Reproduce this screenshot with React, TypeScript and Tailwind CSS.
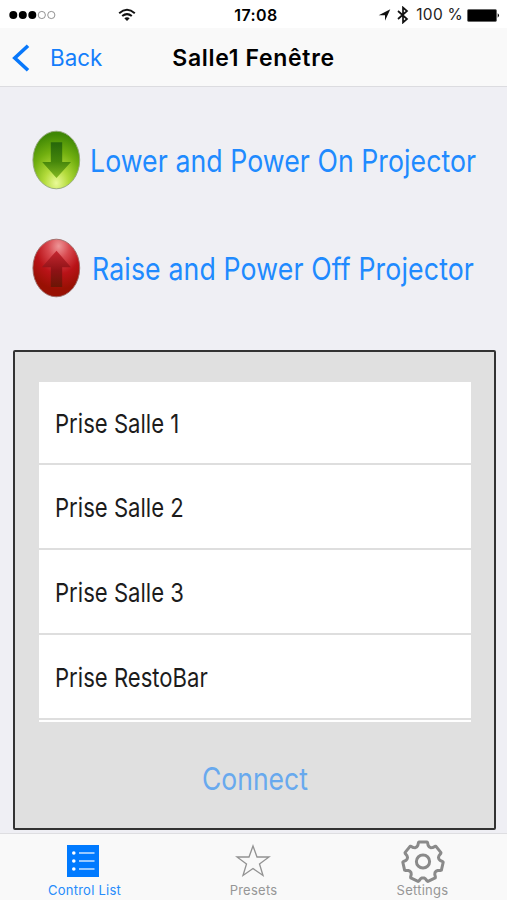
import type { ReactNode } from 'react';

const TEETH = 7;

function gearPath(cx: number, cy: number, outer: number, inner: number) {
  const points: string[] = [];
  const add = (radius: number, degrees: number) => {
    const a = (degrees * Math.PI) / 180;
    points.push(`${(cx + radius * Math.sin(a)).toFixed(2)} ${(cy - radius * Math.cos(a)).toFixed(2)}`);
  };
  for (let i = 0; i < TEETH; i++) {
    const c = (i * 360) / TEETH;
    add(inner + 0.6, c - 17.5);
    add(outer - 0.6, c - 13.5);
    add(outer, c - 11.5);
    add(outer, c + 11.5);
    add(outer - 0.6, c + 13.5);
    add(inner + 0.6, c + 17.5);
    add(inner - 0.5, c + 180 / TEETH - 3);
    add(inner - 0.5, c + 180 / TEETH + 3);
  }
  return `M${points.join('L')}Z`;
}

function StatusBar() {
  return (
    <div className="grid h-7 shrink-0 grid-cols-[1fr_auto_1fr] items-center bg-white pt-[2px]">
      <div className="flex items-center pl-[9px]">
        <svg width="47" height="10" viewBox="0 0 47 10">
          <circle cx="4.3" cy="5" r="4" />
          <circle cx="13.8" cy="5" r="4" />
          <circle cx="23.3" cy="5" r="4" />
          <circle cx="32.8" cy="5" r="3.6" fill="none" stroke="#777" strokeWidth="0.8" />
          <circle cx="42.3" cy="5" r="3.6" fill="none" stroke="#777" strokeWidth="0.8" />
        </svg>
        <svg className="ml-[62px]" width="18" height="14" viewBox="0 0 18 14" fill="none" stroke="#111" strokeWidth="2">
          <path d="M1.2 5.2Q9 -1.6 16.8 5.2M4.2 8.1Q9 4.1 13.8 8.1" />
          <path d="M6.3 10.2Q9 8.3 11.7 10.2L9 13Z" fill="#111" stroke="none" />
        </svg>
      </div>
      <span className="pl-[5px] text-[16px] leading-5 font-semibold tracking-[0.45px]">17:08</span>
      <div className="flex items-center justify-end pr-[7px]">
        <svg width="13" height="12" viewBox="0 0 13 12">
          <path d="M12.3.3 7 11.8V6.3H.7Z" fill="#111" />
        </svg>
        <svg className="ml-[6px]" width="12" height="18" viewBox="0 0 12 18" fill="none" stroke="#111" strokeWidth="1.7">
          <path d="M1 5 10 13 6 16.5V1.5L10 5 1 13" />
        </svg>
        <span className="ml-[7px] text-[15.5px] leading-5 tracking-[0.25px] whitespace-nowrap text-[#222]">100 %</span>
        <svg className="ml-[4px]" width="33" height="13" viewBox="0 0 33 13">
          <rect x=".5" y=".5" width="29" height="12" rx="1.3" fill="#000" stroke="#666" />
          <path d="M30.7 4.3q2.6 2.2 0 4.4Z" />
        </svg>
      </div>
    </div>
  );
}

function NavBar() {
  return (
    <div className="grid h-[59px] shrink-0 grid-cols-[1fr_auto_1fr] items-center border-b border-[#dcdce0] bg-[#f9f9f9]">
      <div className="flex items-center pt-px pl-[12px] text-[#147efb]">
        <svg width="18" height="28" viewBox="0 0 18 28" fill="none" stroke="#0878fb" strokeWidth="3.6">
          <path d="M16 1.7 2.8 14 16 26.3" />
        </svg>
        <span className="ml-[20px] pt-px text-[22.4px] leading-7">Back</span>
      </div>
      <h1 className="pt-[2px] text-[23px] leading-7 font-semibold tracking-[0.68px] whitespace-nowrap">Salle1 Fenêtre</h1>
      <div />
    </div>
  );
}

function Orb({ up }: { up?: boolean }) {
  const id = up ? 'red' : 'green';
  return (
    <svg className="shrink-0" width="50" height="60" viewBox="0 0 50 60">
      <defs>
        <radialGradient id={`${id}-orb`} cx={up ? '.55' : '.5'} cy={up ? '.12' : '.9'} r={up ? '.75' : '.85'}>
          <stop offset="0" stopColor={up ? '#ee9698' : '#eafa98'} />
          <stop offset=".3" stopColor={up ? '#d84a50' : '#b4dc3c'} />
          <stop offset=".65" stopColor={up ? '#b91318' : '#72b010'} />
          <stop offset="1" stopColor={up ? '#981003' : '#3f8705'} />
        </radialGradient>
        <linearGradient id={`${id}-arrow`} x1="0" y1="0" x2="0" y2="1">
          <stop offset="0" stopColor={up ? '#c62832' : '#26670a'} />
          <stop offset=".55" stopColor={up ? '#8d1215' : '#46870b'} />
          <stop offset="1" stopColor={up ? '#6b1605' : '#84b921'} />
        </linearGradient>
      </defs>
      <ellipse cx="25.3" cy="30" rx="23.4" ry="28.8" fill={`url(#${id}-orb)`} stroke={up ? '#9c6a66' : '#93a67a'} strokeWidth="0.9" />
      <path
        d={up ? 'M25.5 12.7 40 29.3H31.2V49H19.8V29.3H10.8Z' : 'M19.8 12.3H31.2V32H40L25.5 48 11.2 32H19.8Z'}
        fill={`url(#${id}-arrow)`}
      />
    </svg>
  );
}

function ListRow({ children }: { children: ReactNode }) {
  return (
    <li className="flex h-[85px] items-center border-b-2 border-[#dedede] bg-white pt-[3px] pl-4 first:h-[83px]">
      <span className="origin-left scale-x-[0.85] text-[26px] leading-8 whitespace-nowrap text-[#1c1c1c]">{children}</span>
    </li>
  );
}

function Tab({ label, active, children }: { label: string; active?: boolean; children: ReactNode }) {
  return (
    <div className={`flex flex-1 flex-col items-center ${active ? 'text-[#268bfb]' : 'text-[#969696]'}`}>
      <div className="flex h-[48px] items-center pt-[6px]">{children}</div>
      <span className="text-[13px] leading-4 tracking-[0.25px]">{label}</span>
    </div>
  );
}

export default function App() {
  return (
    <div className="flex h-[900px] w-[507px] flex-col overflow-hidden bg-[#efeff4] font-[Inter,sans-serif] text-black">
      <StatusBar />
      <NavBar />
      <main className="flex flex-1 flex-col">
        <button className="mt-[43px] ml-[31px] flex h-[60px] items-center">
          <Orb />
          <span className="ml-[9px] origin-left scale-x-[0.86] pt-[2px] text-[31px] leading-10 tracking-[0.08px] whitespace-nowrap text-[#208aff]">
            Lower and Power On Projector
          </span>
        </button>
        <button className="mt-[48px] ml-[31px] flex h-[60px] items-center">
          <Orb up />
          <span className="ml-[11px] origin-left scale-x-[0.86] pt-[2px] text-[31px] leading-10 tracking-[0.17px] whitespace-nowrap text-[#208aff]">
            Raise and Power Off Projector
          </span>
        </button>
        <section className="mt-[52px] mr-[11px] ml-[13px] flex h-[480px] flex-col rounded-[2px] border-2 border-[#333] bg-[#e0e0e0] pt-[30px] pr-[23px] pl-[24px]">
          <ul className="h-[340px] shrink-0 overflow-hidden bg-white">
            <ListRow>Prise Salle 1</ListRow>
            <ListRow>Prise Salle 2</ListRow>
            <ListRow>Prise Salle 3</ListRow>
            <ListRow>Prise RestoBar</ListRow>
          </ul>
          <button className="mt-[37px] flex h-10 items-center justify-center">
            <span className="scale-x-[0.855] text-[31px] leading-10 text-[#68a9ee]">Connect</span>
          </button>
        </section>
      </main>
      <nav className="flex h-[67px] shrink-0 border-t border-[#dedee1] bg-[#f9f9f9]">
        <Tab label="Control List" active>
          <svg className="mr-[3px]" width="32" height="32" viewBox="0 0 32 32">
            <rect width="32" height="32" fill="#007aff" />
            {[8, 16, 24].map((y) => (
              <g key={y}>
                <circle cx="6.8" cy={y} r="1.8" fill="white" />
                <path d={`M12 ${y}H27.5`} stroke="white" strokeWidth="1.2" />
              </g>
            ))}
          </svg>
        </Tab>
        <Tab label="Presets">
          <svg className="mr-[2px]" width="36" height="34" viewBox="0 0 36 34" fill="none" stroke="#929292" strokeWidth="1.3">
            <path d="M18 2 22 13H34L24.5 20 28 31.5 18 24.5 8 31.5 11.5 20 2 13H14Z" />
          </svg>
        </Tab>
        <Tab label="Settings">
          <svg className="ml-px" width="46" height="46" viewBox="0 0 46 46" fill="none" stroke="#8a8a8a" strokeWidth="3" strokeLinejoin="round">
            <path d={gearPath(23, 23.8, 20.2, 16.6)} />
            <circle cx="23" cy="23.5" r="6.6" />
          </svg>
        </Tab>
      </nav>
    </div>
  );
}
